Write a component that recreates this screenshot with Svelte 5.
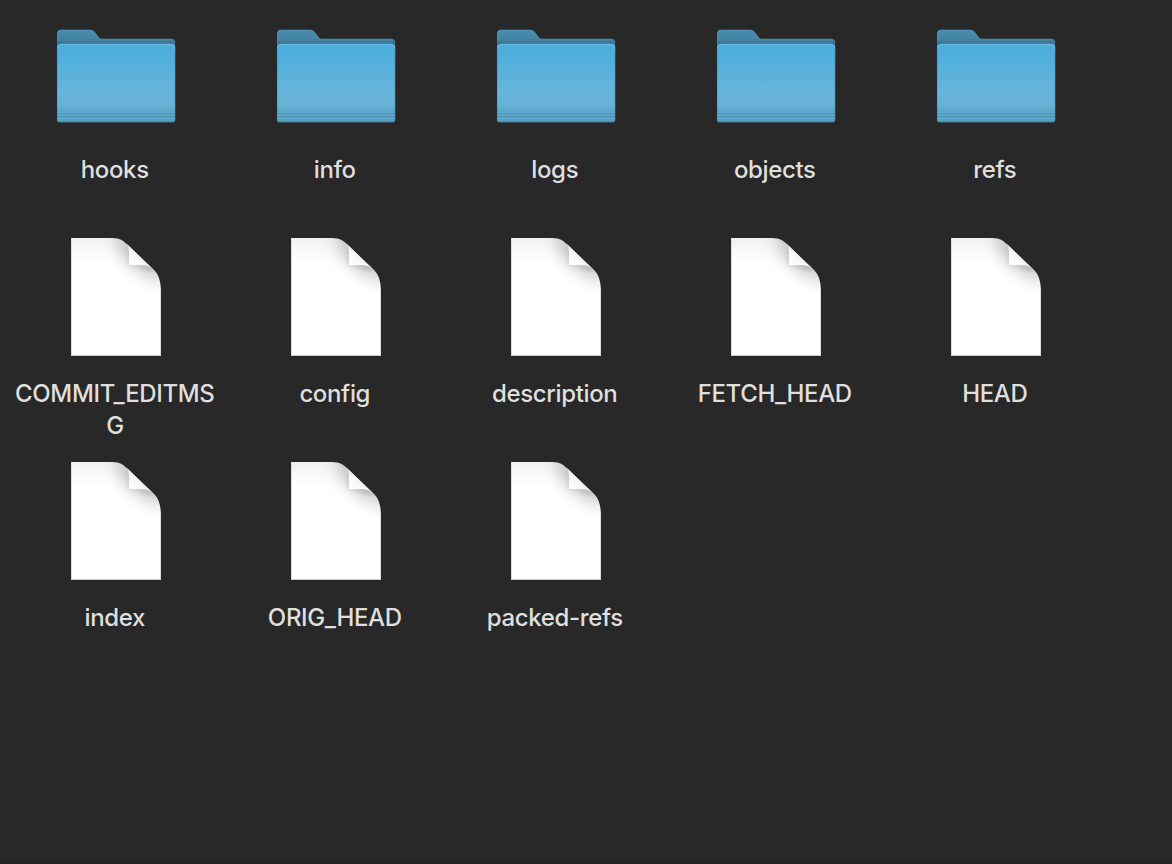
<script>
  const items = [
    { name: 'hooks', folder: true },
    { name: 'info', folder: true },
    { name: 'logs', folder: true },
    { name: 'objects', folder: true },
    { name: 'refs', folder: true },
    { name: 'COMMIT_EDITMSG' },
    { name: 'config' },
    { name: 'description' },
    { name: 'FETCH_HEAD' },
    { name: 'HEAD' },
    { name: 'index' },
    { name: 'ORIG_HEAD' },
    { name: 'packed-refs' }
  ];
</script>

<svg class="defs" width="0" height="0" aria-hidden="true">
  <defs>
    <linearGradient id="back" x1="0" y1="21" x2="0" y2="37" gradientUnits="userSpaceOnUse">
      <stop offset="0" stop-color="#4b8db0" />
      <stop offset="0.6" stop-color="#4584a4" />
      <stop offset="1" stop-color="#3b718d" />
    </linearGradient>
    <linearGradient id="front" x1="0" y1="36" x2="0" y2="114" gradientUnits="userSpaceOnUse">
      <stop offset="0" stop-color="#4baddd" />
      <stop offset="0.15" stop-color="#4eaedc" />
      <stop offset="0.65" stop-color="#69b5da" />
      <stop offset="0.78" stop-color="#66b2d5" />
      <stop offset="0.88" stop-color="#5ba5c8" />
      <stop offset="1" stop-color="#529dc2" />
    </linearGradient>
    <linearGradient id="paper" x1="0" y1="6" x2="0" y2="36" gradientUnits="userSpaceOnUse">
      <stop offset="0" stop-color="#f0f0f0" />
      <stop offset="0.5" stop-color="#fafafa" />
      <stop offset="1" stop-color="#ffffff" />
    </linearGradient>
    <linearGradient id="fold" x1="77" y1="33" x2="89" y2="21" gradientUnits="userSpaceOnUse">
      <stop offset="0" stop-color="#ffffff" />
      <stop offset="0.6" stop-color="#f8f8f8" />
      <stop offset="1" stop-color="#e8e8e8" />
    </linearGradient>
    <filter id="soft" x="-60%" y="-60%" width="220%" height="220%">
      <feGaussianBlur stdDeviation="7" />
    </filter>
    <filter id="tight" x="-60%" y="-60%" width="220%" height="220%">
      <feGaussianBlur stdDeviation="2" />
    </filter>
    <clipPath id="sheet">
      <path d="M19 6H60C67.5 6 71.5 8.8 75.4 12.6L102.2 38.2C107 43 109 50 109 61V123.8H19Z" />
    </clipPath>
  </defs>
</svg>

<main>
  {#each items as item}
    <div class="item">
      {#if item.folder}
        <svg class="icon" viewBox="0 0 128 128">
          <path d="M5 42V25.5Q5 21.7 9 21.7H37.5C40.5 21.7 41.8 22.6 43.2 24.5L46.4 28.8C47.5 30.3 48.5 30.8 50.5 30.8H119Q123.2 30.8 123.2 35V42Z" fill="url(#back)" />
          <path d="M5.5 38V25.7Q5.7 22.2 9 22.2H37.5C40.3 22.2 41.4 23 42.8 24.9L46 29.2C47.3 30.8 48.4 31.3 50.5 31.3H119Q122.3 31.3 122.8 35" fill="none" stroke="#5b9dbf" stroke-width="0.6" opacity="0.5" />
          <path d="M5 39.5Q5 34.8 9 34.8H119.2Q123.2 34.8 123.2 39.5Z" fill="#315e77" opacity="0.5" />
          <path d="M5 40Q5 35.8 9 35.8H119.2Q123.2 35.8 123.2 40V112Q123.2 114.3 121 114.3H7.2Q5 114.3 5 112Z" fill="url(#front)" />
          <path d="M5.5 40.5Q5.5 36.4 9 36.4H119.2Q122.7 36.4 122.7 40.5" fill="none" stroke="#6ebde3" stroke-width="1" />
          <path d="M5.4 40V112M122.8 40V112" stroke="#3b8bb3" stroke-width="0.8" opacity="0.45" />
          <path d="M5.5 104.5H122.7M5.5 107.5H122.7M5.5 110.5H122.7" stroke="#70b8d8" stroke-width="1" opacity="0.45" />
          <path d="M5.5 105.5H122.7M5.5 108.5H122.7M6 113.7H122.2" stroke="#397fa3" stroke-width="1" opacity="0.4" />
        </svg>
      {:else}
        <svg class="icon" viewBox="0 0 128 128">
          <g clip-path="url(#sheet)">
            <rect x="19" y="6" width="90" height="118" fill="url(#paper)" />
            <path d="M62 0L68 24L86 42L114 54V30L80 0Z" fill="#000" opacity="0.17" filter="url(#soft)" />
            <path d="M74 10L77 33H98L104 40L80 34Z" fill="#000" opacity="0.15" filter="url(#tight)" />
            <path d="M75.4 12.6C76.6 14.6 77 16.4 77 19V33H91C95.5 33 99 35.2 102.2 38.2L104 36L76 8Z" fill="url(#fold)" />
            <path d="M19.4 6V123.4H108.6V58" fill="none" stroke="#d0d0d0" stroke-width="0.8" />
          </g>
        </svg>
      {/if}
      <div class="label">{item.name}</div>
    </div>
  {/each}
</main>

<style>
  :global(body) {
    margin: 0;
    background: #282828;
  }
  .defs {
    display: block;
  }
  main {
    box-sizing: border-box;
    height: 864px;
    padding: 8px 0 0 5px;
    display: grid;
    grid-template-columns: repeat(5, 220px);
    grid-auto-rows: 224px;
    align-content: start;
    background: linear-gradient(#282828, #282828) top / 100% 859px no-repeat #252525;
    overflow: hidden;
  }
  .item {
    display: flex;
    flex-direction: column;
    align-items: center;
  }
  .icon {
    width: 128px;
    height: 128px;
    margin-left: 2px;
    flex: none;
  }
  .label {
    width: 200px;
    margin-top: 18px;
    font: 500 24px/32px Inter, sans-serif;
    letter-spacing: -0.36px;
    color: #dfdfdf;
    text-align: center;
    text-indent: -0.5px;
    word-break: break-all;
  }
</style>
